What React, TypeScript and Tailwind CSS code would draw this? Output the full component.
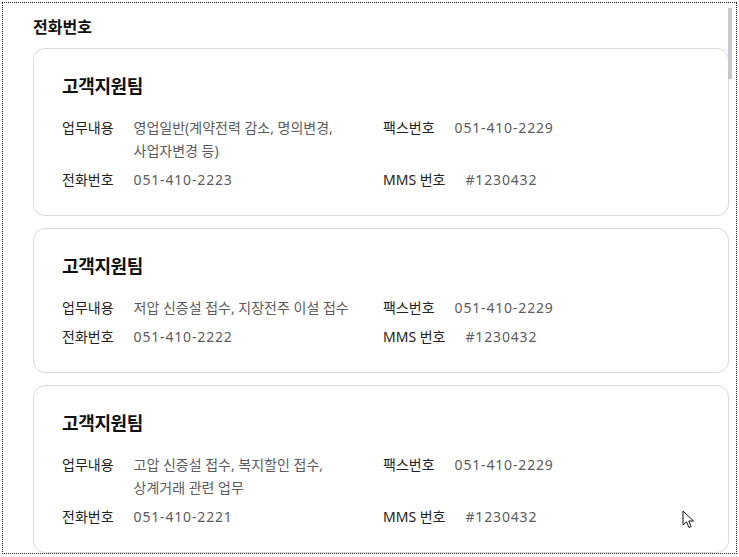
const teams = [
  { work: '영업일반(계약전력 감소, 명의변경, 사업자변경 등)', tel: '051-410-2223' },
  { work: '저압 신증설 접수, 지장전주 이설 접수', tel: '051-410-2222' },
  { work: '고압 신증설 접수, 복지할인 접수, 상계거래 관련 업무', tel: '051-410-2221' },
]

const Row = ({ label, value, num = false }: { label: string; value: string; num?: boolean }) => (
  <div className="flex gap-5 text-[14px] leading-[23px]">
    <span className="shrink-0 text-[#222]">{label}</span>
    <span className={num ? 'text-[#5b5b60] tracking-[0.06em]' : 'text-[#5b5b60] break-keep pr-[10px]'}>{value}</span>
  </div>
)

const App = () => {
  return (
    <main className="w-[739px] h-[557px] bg-white p-[2px] font-['Noto_Sans','Noto_Sans_CJK_KR',sans-serif]">
      <div className="relative h-[552px] w-[735px] border border-dotted border-[#222] overflow-hidden pl-[30px] pr-[7px] pt-[13px]">
        <h2 className="text-[16px] leading-[22px] font-bold text-[#111] mb-[10px]">전화번호</h2>
        <div className="flex flex-col gap-[12px]">
          {teams.map((t, i) => (
            <div key={i} className="rounded-[12px] border border-[#d9d9de] bg-white px-[28px] pt-[25px] pb-[24px]">
              <h3 className="text-[18px] leading-[24px] font-bold tracking-[-0.02em] text-[#111] mb-[18px]">고객지원팀</h3>
              <div className="grid grid-cols-2 gap-x-1 gap-y-[6px]">
                <Row label="업무내용" value={t.work} />
                <Row label="팩스번호" value="051-410-2229" num />
                <Row label="전화번호" value={t.tel} num />
                <Row label="MMS 번호" value="#1230432" num />
              </div>
            </div>
          ))}
        </div>
        <div className="absolute right-[4px] top-[5px] w-[4px] h-[71px] bg-[#c8c8ce]" />
        <svg className="absolute left-[679px] top-[507px]" width="14" height="20" viewBox="0 0 14 20">
          <path d="M1 1 L1 15 L4.5 11.8 L7 17.5 L9.2 16.5 L6.8 11 L11.5 11 Z" fill="white" stroke="#111" strokeWidth="1" strokeLinejoin="round" />
        </svg>
      </div>
    </main>
  )
}

export default App
